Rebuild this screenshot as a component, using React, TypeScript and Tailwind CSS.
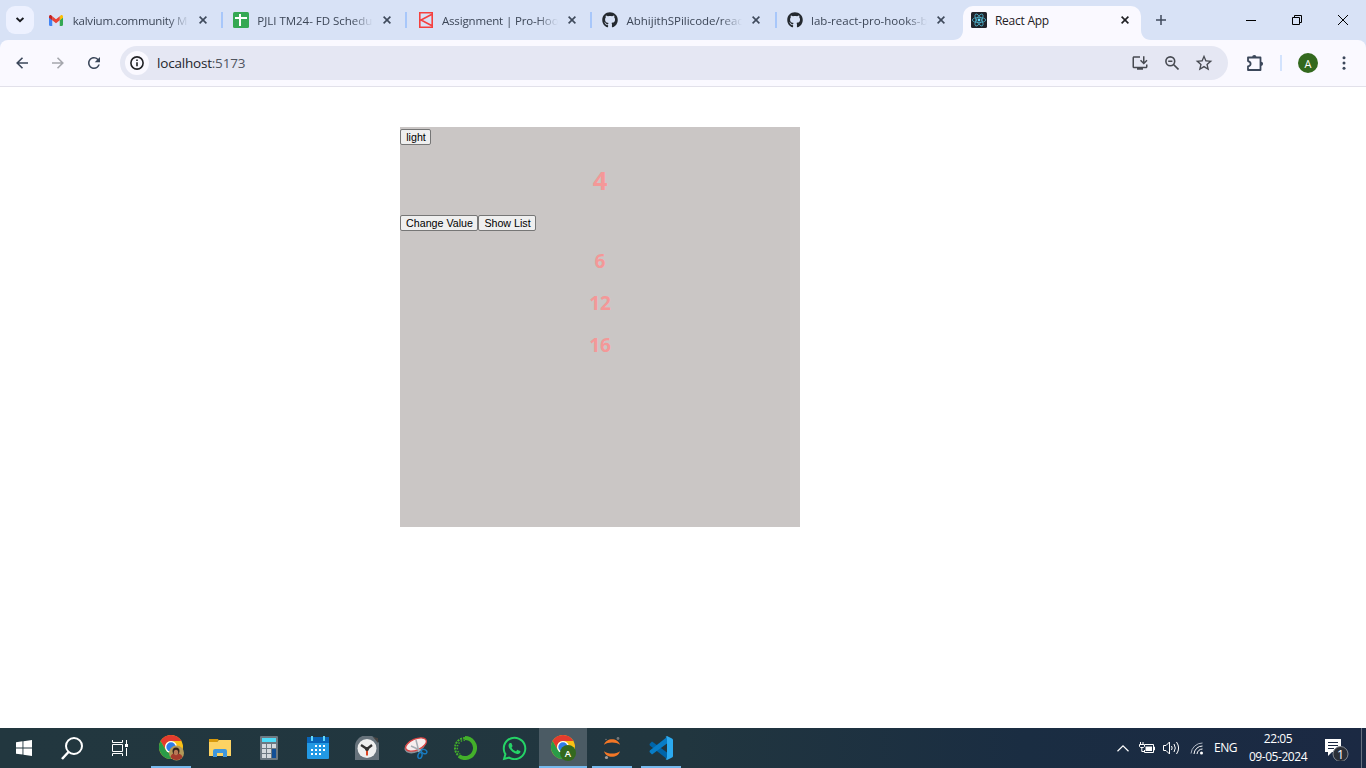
import type { ReactNode } from "react";
import { FaGithub, FaWhatsapp } from "react-icons/fa";
import { MdInstallDesktop, MdRefresh, MdStarBorder } from "react-icons/md";

const GmailIcon = () => (
  <svg width="14" height="11" viewBox="0 0 52 40" className="-ml-[2px]">
    <path fill="#4285f4" d="M0 8v28c0 2 1.500 4 4 4h8V17z" />
    <path fill="#34a853" d="M40 17v23h8c2.500 0 4-2 4-4V8z" />
    <path fill="#fbbc04" d="M40 5v14l12-9V6c0-5-5-8-9-5z" />
    <path fill="#ea4335" d="M12 19V4l14 11L40 4v15L26 30z" />
    <path fill="#c5221f" d="M0 6v4l12 9V4L9 1C5-2 0 1 0 6z" />
  </svg>
);

const SheetIcon = () => (
  <svg width="16" height="16" viewBox="0 0 16 16">
    <rect width="16" height="16" rx="1.500" fill="#34a853" />
    <path d="M7 2v12M2 6h12" stroke="#fff" strokeWidth="2" />
  </svg>
);

const KalviumIcon = () => (
  <svg width="16" height="16" viewBox="0 0 16 16" fill="none" stroke="#f5403f" strokeWidth="1.600">
    <path d="M1.800.8h12.400v14.400H1.800zM13.500 2.500L3 8l10.500 5.500" />
  </svg>
);

const ReactTile = () => (
  <svg width="16" height="16" viewBox="0 0 16 16">
    <rect width="16" height="16" rx="1.500" fill="#20232a" />
    <g fill="none" stroke="#4fb3cc" strokeWidth=".8">
      <ellipse cx="8" cy="8" rx="6.700" ry="2.600" />
      <ellipse cx="8" cy="8" rx="6.700" ry="2.600" transform="rotate(60 8 8)" />
      <ellipse cx="8" cy="8" rx="6.700" ry="2.600" transform="rotate(120 8 8)" />
    </g>
    <circle cx="8" cy="8" r="1.400" fill="#61dafb" />
  </svg>
);

const CloseIcon = ({ color }: { color: string }) => (
  <svg width="8" height="8" viewBox="0 0 8 8" stroke={color} strokeWidth="1.600">
    <path d="M.6.6l6.800 6.800M7.400.6L.6 7.400" />
  </svg>
);

type TabData = { icon: ReactNode; title: string; tracking: string };

const tabs: TabData[] = [
  { icon: <GmailIcon />, title: "kalvium.community M", tracking: "tracking-[-0.220px]" },
  { icon: <SheetIcon />, title: "PJLI TM24- FD Schedu", tracking: "tracking-[-0.020px]" },
  { icon: <KalviumIcon />, title: "Assignment | Pro-Hoo", tracking: "tracking-[-0.150px]" },
  { icon: <FaGithub size={16} color="#24292f" />, title: "AbhijithSPilicode/reac", tracking: "tracking-[0px]" },
  { icon: <FaGithub size={16} color="#24292f" />, title: "lab-react-pro-hooks-b", tracking: "tracking-[0px]" },
];

const Tab = ({ icon, title, tracking }: TabData) => (
  <div className="flex h-10 w-[184.600px] shrink-0 items-center pl-[10.500px]">
    <div className="flex w-4 justify-center">{icon}</div>
    <div
      className={`ml-2 mt-[2px] h-5 w-[116px] overflow-hidden whitespace-nowrap text-[11.500px] leading-5 text-[#3c4657] [mask-image:linear-gradient(to_right,black_82%,transparent)] ${tracking}`}
    >
      {title}
    </div>
    <div className="ml-[10px] flex w-2">
      <CloseIcon color="#3f4a5c" />
    </div>
    <div className="ml-auto h-4 w-[2px] bg-[#a8c7fa]" />
  </div>
);

const Flare = ({ flip }: { flip?: boolean }) => (
  <svg width="10" height="10" viewBox="0 0 10 10" className={flip ? "self-end -scale-x-100" : "self-end"}>
    <path d="M10 0v10H0C6 10 10 6 10 0z" fill="#faf9ff" />
  </svg>
);

const TabStrip = () => (
  <div className="flex h-10 bg-[#d8e2f6]">
    <div className="flex w-[38.200px] shrink-0 items-center pl-[6px]">
      <div className="flex h-7 w-7 items-center justify-center rounded-[9px] bg-[#edf1ff]">
        <svg width="8" height="6" viewBox="0 0 8 6" fill="none" stroke="#1a1c22" strokeWidth="1.900">
          <path d="M.6 1L4 4.300 7.400 1" />
        </svg>
      </div>
    </div>
    {tabs.slice(0, 4).map((t) => (
      <Tab key={t.title} {...t} />
    ))}
    <div className="flex h-10 w-[176.400px] shrink-0 items-center overflow-hidden">
      <Tab {...tabs[4]} />
    </div>
    <Flare />
    <div className="mt-[6px] flex w-[178px] shrink-0 items-center rounded-t-[10px] bg-[#faf9ff] pb-[6px] pl-2">
      <ReactTile />
      <span className="ml-2 mt-[2px] w-[126px] text-[12px] leading-5 tracking-[-0.250px] text-[#1f2024]">React App</span>
      <CloseIcon color="#1f2024" />
    </div>
    <Flare flip />
    <div className="flex w-[18px] items-center pl-[5px]">
      <svg width="10" height="10" viewBox="0 0 10 10" className="shrink-0" stroke="#3f4a5c" strokeWidth="1.500">
        <path d="M5 0v10M0 5h10" />
      </svg>
    </div>
    <div className="ml-auto flex items-center text-black">
      <div className="flex w-[46px] justify-center">
        <svg width="10" height="10" viewBox="0 0 10 10" stroke="black">
          <path d="M0 5.500h10" />
        </svg>
      </div>
      <div className="flex w-[46px] justify-center">
        <svg width="10" height="10" viewBox="0 0 10 10" fill="none" stroke="black">
          <path d="M.5 2.500h7v7h-7zM2.500 2.500v-2h7v7h-2" />
        </svg>
      </div>
      <div className="flex w-[46px] justify-center">
        <svg width="10" height="10" viewBox="0 0 10 10" stroke="black">
          <path d="M0 0l10 10M10 0L0 10" />
        </svg>
      </div>
    </div>
  </div>
);

const Arrow = ({ color, flip }: { color: string; flip?: boolean }) => (
  <svg
    width="12"
    height="12"
    viewBox="0 0 12 12"
    fill="none"
    stroke={color}
    strokeWidth="1.600"
    className={flip ? "-scale-x-100" : ""}
  >
    <path d="M12 6H1.200M6.500.7L1.200 6l5.300 5.300" />
  </svg>
);

const InfoGlyph = () => (
  <svg width="14" height="14" viewBox="0 0 14 14" fill="none" stroke="#202124" strokeWidth="1.600">
    <circle cx="7" cy="7" r="6.100" />
    <path d="M7 6.200v4M7 3.600v1.500" />
  </svg>
);

const ZoomOutGlyph = () => (
  <svg width="14" height="14" viewBox="0 0 14 14" fill="none" stroke="#474a51" strokeWidth="1.600">
    <circle cx="5.300" cy="5.300" r="4.400" />
    <path d="M8.500 8.500l5 5M3.200 5.300h4.200" />
  </svg>
);

const Puzzle = () => (
  <svg width="18" height="18" viewBox="0 0 18 18" className="ml-[18px]">
    <path
      d="M2 3.500h12.500v12.500H2V12.500q2.600-.6 2.600-2.700T2 7.100z"
      fill="none"
      stroke="#3b475a"
      strokeWidth="1.800"
      strokeLinejoin="round"
    />
    <path d="M6.200 3a2.100 2.100 0 0 1 4.200 0zM15 7.700a2.100 2.100 0 0 1 0 4.200z" fill="#3b475a" />
  </svg>
);

const Toolbar = () => (
  <div className="h-[47px] bg-[#d8e2f6]">
    <div className="flex h-[47px] items-center rounded-t-[8px] border-b border-[#e2e1ea] bg-[#faf9ff] pl-4">
      <Arrow color="#3b475a" />
      <div className="ml-6">
        <Arrow color="#a5a7ad" flip />
      </div>
      <MdRefresh size={18} color="#3b475a" className="ml-[21px]" />
      <div className="ml-[17px] flex h-[34px] w-[1108px] items-center rounded-full bg-[#e5e7f3] pl-[5px] pr-[14px]">
        <div className="flex h-6 w-6 items-center justify-center rounded-full bg-[#faf9ff]">
          <InfoGlyph />
        </div>
        <span className="ml-2 text-[13.500px] leading-5 tracking-[-0.200px] text-[#23252b]">
          localhost<span className="text-[#50555f]">:5173</span>
        </span>
        <div className="ml-auto flex items-center">
          <MdInstallDesktop size={18} color="#474a51" />
          <div className="ml-4">
            <ZoomOutGlyph />
          </div>
          <MdStarBorder size={20} color="#474a51" className="ml-[15px]" />
        </div>
      </div>
      <Puzzle />
      <div className="ml-4 h-4 w-[2px] bg-[#d3e3fd]" />
      <div className="ml-4 flex h-5 w-5 items-center justify-center rounded-full bg-[#33691e] text-[11px] leading-none text-white">
        A
      </div>
      <svg width="4" height="14" viewBox="0 0 4 14" className="ml-6" fill="#3b475a">
        <circle cx="2" cy="1.700" r="1.500" />
        <circle cx="2" cy="7" r="1.500" />
        <circle cx="2" cy="12.300" r="1.500" />
      </svg>
    </div>
  </div>
);

const PageButton = ({ children, width }: { children: ReactNode; width: string }) => (
  <button
    className={`flex h-4 items-center justify-center whitespace-nowrap rounded-[2px] border border-[#767676] bg-[#efefef] pl-px font-['Liberation_Sans',Arial,sans-serif] text-[10.670px] font-normal leading-none text-black ${width}`}
  >
    {children}
  </button>
);

const Content = () => (
  <main className="h-[641px] bg-white pl-[400px] pt-10">
    <div className="h-[400px] w-[400px] bg-[#cac6c5] pt-[2px] text-center font-bold text-[#f49898]">
      <PageButton width="w-[31px]">light</PageButton>
      <h1 className="mt-[19px] text-[25.600px] leading-[34px]">4</h1>
      <div className="mt-[17px] flex">
        <PageButton width="w-[78px]">Change Value</PageButton>
        <PageButton width="w-[58px]">Show List</PageButton>
      </div>
      <div className="mt-[17px] flex flex-col gap-4 text-[19px] leading-[26px]">
        <h2>6</h2>
        <h2>12</h2>
        <h2>16</h2>
      </div>
    </div>
  </main>
);

const Chrome = ({ badge }: { badge: ReactNode }) => (
  <svg width="26" height="28" viewBox="0 0 26 28">
    <circle cx="13" cy="13" r="12" fill="#fbc116" />
    <path d="M2.600 7A12 12 0 0 1 23.400 7H13a6 6 0 0 0-5.200 9z" fill="#e33b2e" />
    <path d="M2.600 7A12 12 0 0 0 13 25l5.200-9a6 6 0 0 1-10.400 0z" fill="#2a9b48" />
    <circle cx="13" cy="13" r="6" fill="#fff" />
    <circle cx="13" cy="13" r="4.700" fill="#2f7de9" />
    {badge}
  </svg>
);

const ProfileBadge = (
  <g>
    <circle cx="18.500" cy="19" r="7.500" fill="#b39a59" />
    <path d="M12.500 23c1-4 4-4 6-4s5 1 6 4a7.500 7.500 0 0 1-12 0z" fill="#a33b2c" />
    <circle cx="18" cy="17" r="3.500" fill="#35221b" />
    <ellipse cx="18" cy="18.500" rx="2.200" ry="2.800" fill="#b97855" />
  </g>
);

const LetterBadge = (
  <g>
    <circle cx="18" cy="19" r="8" fill="#33691e" />
    <text x="18" y="22.500" textAnchor="middle" fontSize="9.500" fontWeight="600" fill="#fff">
      A
    </text>
  </g>
);

const Explorer = () => (
  <svg width="22" height="20" viewBox="0 0 22 20">
    <path d="M0 1h9l1 2h-1l-2 2H0z" fill="#d99a0b" />
    <path d="M0 4h8l2-2h12v16H0z" fill="#fdd363" />
    <path d="M4 19v-6q0-2 2-2h10q2 0 2 2v6h-4v-4H8v4z" fill="#4097dc" />
  </svg>
);

const Calculator = () => (
  <svg width="18" height="24" viewBox="0 0 18 24">
    <rect width="18" height="24" rx="1" fill="#6d7982" />
    <rect x="2" y="2" width="14" height="4" fill="#4edcf8" />
    <g fill="#d4d9dd">
      <path d="M2 8h4v4H2zM7 8h4v4H7zM12 8h4v4h-4zM2 13h4v4H2zM7 13h4v4H7zM2 18h4v4H2zM7 18h4v4H7z" />
    </g>
    <path d="M12 13h4v9h-4z" fill="#124f96" />
  </svg>
);

const Calendar = () => (
  <svg width="22" height="24" viewBox="0 0 22 24">
    <rect y="1" width="22" height="22" rx="1" fill="#2299e4" />
    <path d="M0 1h22v6H0z" fill="#0865b8" />
    <path d="M4 0h2v5H4zM16 0h2v5h-2z" fill="#61d8fb" />
    <path
      d="M8 9h2v2H8zM12 9h2v2h-2zM16 9h2v2h-2zM4 13h2v2H4zM8 13h2v2H8zM12 13h2v2h-2zM16 13h2v2h-2zM4 17h2v2H4zM8 17h2v2H8zM12 17h2v2h-2z"
      fill="#fff"
    />
  </svg>
);

const Clock = () => (
  <svg width="24" height="24" viewBox="0 0 24 24">
    <path d="M0 24V11A12 11 0 0 1 21 3l3 4v17z" fill="#66727b" />
    <path d="M18 1l5 1v5z" fill="#454240" />
    <circle cx="12" cy="12.500" r="9.500" fill="#eeefef" />
    <path d="M6 9l6 4 5-4" fill="none" stroke="#323232" strokeWidth="2.300" />
    <path d="M12 13v6.500" stroke="#dd4624" strokeWidth="2" />
    <circle cx="12" cy="13" r="2" fill="#323232" />
  </svg>
);

const Snip = () => (
  <svg width="24" height="22" viewBox="0 0 24 22">
    <ellipse cx="11" cy="9" rx="11" ry="6.500" transform="rotate(-23 11 9)" fill="#8c9299" />
    <ellipse cx="12" cy="7.500" rx="11" ry="5.500" transform="rotate(-23 12 7.500)" fill="#f6eeee" stroke="#d94444" strokeWidth="1.300" />
    <path d="M12 3l3 12M7 9l11 5" stroke="#a6aeb4" strokeWidth="1.500" />
    <g fill="none" stroke="#187abf" strokeWidth="1.500">
      <ellipse cx="20" cy="14.500" rx="3" ry="2" transform="rotate(25 20 14.500)" />
      <ellipse cx="16" cy="18.500" rx="2" ry="3" transform="rotate(15 16 18.500)" />
    </g>
  </svg>
);

const Anaconda = () => (
  <svg width="24" height="24" viewBox="0 0 24 24" fill="none" stroke="#43b02a">
    <path d="M12 2a10 10 0 1 1-6 18" strokeWidth="4" />
    <path d="M12 2A10 10 0 0 0 6 20" strokeWidth="2" strokeDasharray="2 1" />
    <path d="M12 4A8 8 0 0 0 7 18" strokeWidth="1.500" strokeDasharray="1.500 1.500" />
  </svg>
);

const Jupyter = () => (
  <svg width="18" height="24" viewBox="0 0 18 24">
    <path d="M1 8.800c2-7.500 14-7.500 16 0-4-3.200-12-3.200-16 0zM1 15.200c2 7.500 14 7.500 16 0-4 3.200-12 3.200-16 0z" fill="#f37726" />
    <circle cx="15" cy="2.500" r="1.400" fill="#767677" />
    <circle cx="3" cy="3.500" r=".8" fill="#767677" />
    <circle cx="3.500" cy="21.500" r="1.600" fill="#9e9e9e" />
  </svg>
);

const VsCode = () => (
  <svg width="24" height="24" viewBox="0 0 24 24">
    <path d="M.5 8l2.500-2.500L18 16.500v6.500L.8 9.500z" fill="#0065a9" />
    <path d="M.5 16l2.500 2.500L18 7.500V1L.8 14.500z" fill="#087dc7" />
    <path d="M18 0l5 2.500q1 .5 1 1.500v16q0 1-1 1.500L18 24l-1.500-1q1.500 0 1.500-2V3q0-2-1.500-2z" fill="#2baaf0" />
  </svg>
);

const SearchGlyph = () => (
  <svg width="22" height="23" viewBox="0 0 22 23" fill="none" stroke="#fff" strokeWidth="2">
    <circle cx="13" cy="9" r="8" />
    <path d="M7.500 15L1 22" strokeWidth="2.500" />
  </svg>
);

const WindowsGlyph = () => (
  <svg width="16" height="16" viewBox="0 0 16 16" fill="#fff">
    <path d="M0 2.200L6.500 1.300V7.500H0zM7.400 1.200L16 0v7.500H7.400zM0 8.400h6.500v6.200L0 13.700zM7.400 8.400H16V16l-8.600-1.200z" />
  </svg>
);

const TaskView = () => (
  <svg width="16" height="16" viewBox="0 0 16 16" fill="none" stroke="#fff">
    <path d="M.5 4.500h10v7H.5zM.5 0v2.500h10V0M.5 16v-2.500h10V16M14.500 0v4M14.500 8v8" />
    <path d="M13 4h3v3h-3z" fill="#fff" stroke="none" />
  </svg>
);

type AppSlot = { icon: ReactNode; state?: "open" | "active" };

const apps: AppSlot[] = [
  { icon: <Chrome badge={ProfileBadge} />, state: "open" },
  { icon: <Explorer /> },
  { icon: <Calculator /> },
  { icon: <Calendar /> },
  { icon: <Clock /> },
  { icon: <Snip /> },
  { icon: <Anaconda /> },
  { icon: <FaWhatsapp size={27} color="#25d366" /> },
  { icon: <Chrome badge={LetterBadge} />, state: "active" },
  { icon: <Jupyter />, state: "open" },
  { icon: <VsCode />, state: "open" },
];

const Slot = ({ icon, state }: AppSlot) => (
  <div className={`flex h-10 w-12 flex-col items-center ${state === "active" ? "bg-[#4b5b64]" : ""}`}>
    <div className="mt-[2px] flex h-9 items-center">{icon}</div>
    {state && <div className={`h-[2px] bg-[#76b9ed] ${state === "active" ? "w-12" : "w-10"}`} />}
  </div>
);

const Taskbar = () => (
  <footer className="flex h-10 items-center bg-[linear-gradient(to_right,#22373f_0%,#21363f_50%,#1a2d42_75%,#1b2943_100%)] text-[12px] text-white">
    <div className="flex w-12 justify-center">
      <WindowsGlyph />
    </div>
    <div className="flex w-12 justify-center">
      <SearchGlyph />
    </div>
    <div className="flex w-[51px] pl-4">
      <TaskView />
    </div>
    <div className="flex gap-px">
      {apps.map((a, i) => (
        <Slot key={i} {...a} />
      ))}
    </div>
    <div className="ml-auto flex h-10 items-center">
      <svg width="12" height="7" viewBox="0 0 12 7" fill="none" stroke="#fff" strokeWidth="1.200">
        <path d="M.5 6.300L6 .9l5.500 5.400" />
      </svg>
      <svg width="16" height="12" viewBox="0 0 16 12" fill="none" stroke="#fff" className="ml-[10px]">
        <path d="M6 2.500h8.500v8h-9V8M14.500 5h1v3h-1M1.500 0v2M4 0v2M.5 2.500h5v2l-1 1h-3l-1-1zM2.800 5.500v4h2.500" />
        <path d="M6.500 4.500H13v4.500H6.500z" fill="#fff" stroke="none" />
      </svg>
      <svg width="17" height="14" viewBox="0 0 17 14" fill="none" stroke="#fff" className="ml-2">
        <path d="M.5 4.500H3l3.500-3.500v12L3 9.500H.5zM8.500 5q1.300 2 0 4M11 3q2.600 4 0 8M13.500 1q4.200 6 0 12" />
      </svg>
      <svg width="14" height="14" viewBox="0 0 14 14" fill="none" stroke="#aeb6c2" className="ml-[10px]">
        <path d="M1 12.500A11.500 11.500 0 0 1 12.500 2" />
        <path d="M4 13A8.500 8.500 0 0 1 12.500 5M7 13A5.500 5.500 0 0 1 12.500 8" stroke="#fff" />
        <circle cx="11.500" cy="12" r="1.500" fill="#fff" stroke="none" />
      </svg>
      <span className="ml-[10px] w-[23px] whitespace-nowrap text-[12px] tracking-[-0.500px]">ENG</span>
      <div className="ml-[9px] w-[64px] whitespace-nowrap text-center leading-[18px] tracking-[-0.450px]">
        <div>22:05</div>
        <div>09-05-2024</div>
      </div>
      <svg width="26" height="26" viewBox="0 0 26 26" className="ml-[14px]">
        <path d="M1 4h16v13H8l-4 4v-4H1z" fill="#fff" />
        <path d="M4 7.500h10M4 10.500h10M4 13.500h6" stroke="#1b2943" />
        <circle cx="16.500" cy="19" r="7.500" fill="#2b2f37" stroke="#848991" />
        <text x="16.500" y="23.500" textAnchor="middle" fontSize="12.500" fill="#fff">
          1
        </text>
      </svg>
      <div className="ml-[11px] mr-1 h-10 w-px bg-[#66707f]" />
    </div>
  </footer>
);

export default function App() {
  return (
    <div className="flex h-[768px] w-[1366px] flex-col overflow-hidden font-['Open_Sans','Noto_Sans',sans-serif]">
      <TabStrip />
      <Toolbar />
      <Content />
      <Taskbar />
    </div>
  );
}
